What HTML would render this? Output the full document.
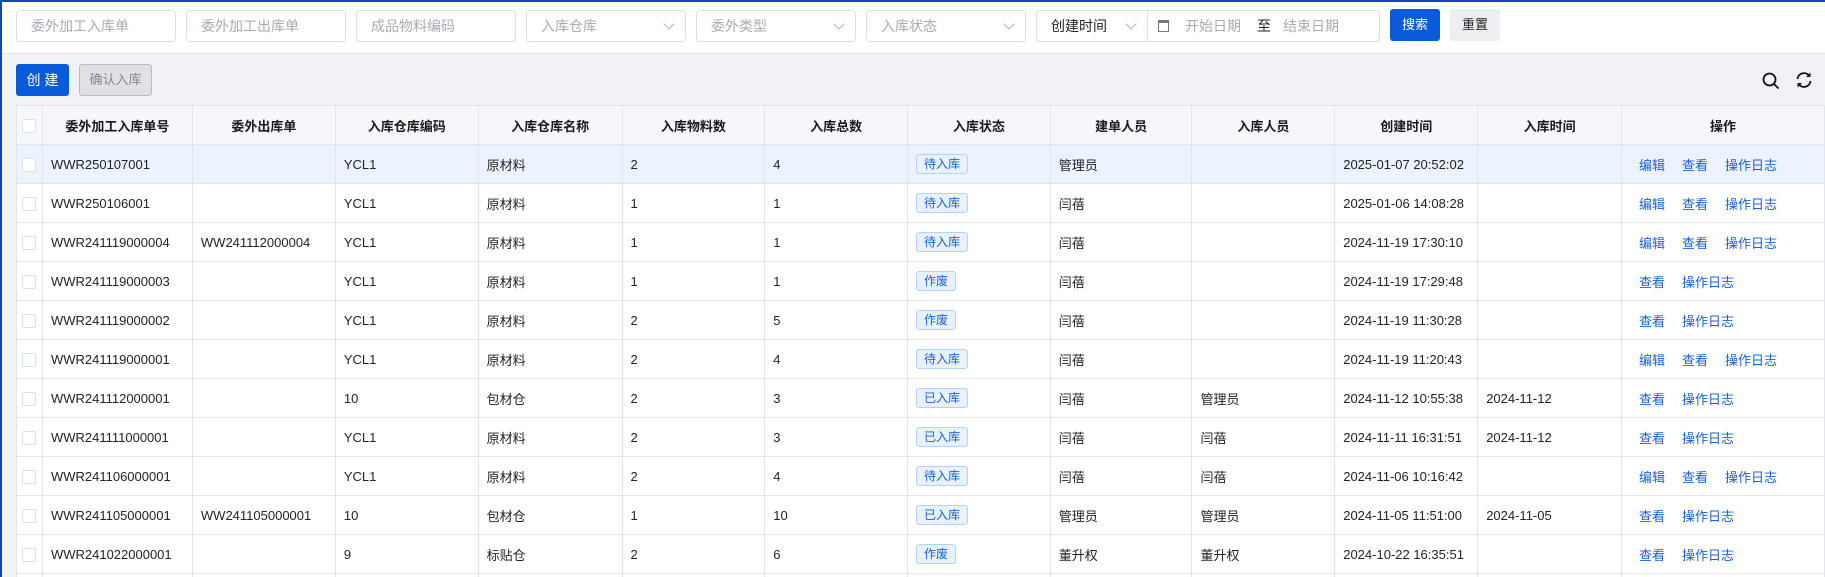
<!DOCTYPE html>
<html style="width:1825px;height:577px;overflow:hidden"><head><meta charset="utf-8"><style>
*{box-sizing:border-box;margin:0;padding:0}
body{width:1825px;height:577px;overflow:hidden;background:#f0f2f5;font-family:"Liberation Sans","Noto Sans CJK SC",sans-serif;font-size:13px;color:#222;position:relative}
.top{position:absolute;left:0;top:0;width:1825px;height:54px;background:#fff;border-bottom:1px solid #e4e7ed}
.bar{position:absolute;left:0;top:0;height:2px;background:#1444b8;width:1825px}
.lb{position:absolute;left:0;top:0;width:2px;height:577px;background:#1444b8;z-index:5}
.in{position:absolute;top:10px;height:32px;border:1px solid #dcdfe6;border-radius:4px;background:#fff;color:#a8abb2;font-size:14px;line-height:30px;padding-left:14px}
.in .ar{position:absolute;right:12px;top:9px;width:8px;height:8px;border-right:1px solid #b0b3b8;border-bottom:1px solid #b0b3b8;transform:rotate(45deg)}
.btn{position:absolute;height:32px;border-radius:3px;font-size:13px;line-height:32px;text-align:center}
.tw{position:absolute;left:16px;top:105px;width:1809px;height:472px;overflow:hidden}
table{border-collapse:collapse;table-layout:fixed;background:#fff}
td,th{border:1px solid #e2e6ec;height:39px;padding:0 8px;white-space:nowrap;overflow:hidden;font-weight:normal;text-align:left}
th{background:#f5f7fa;font-weight:bold;text-align:center;font-size:13px;color:#1a1a1a}
tr.hl td{background:#ebf3fe}
.cb{display:inline-block;width:14px;height:14px;border:1px solid #dcdfe6;border-radius:2px;background:#fff;vertical-align:middle}
td.c,th.c{padding:0;text-align:center}
td.op{padding-left:17px}
.tag{display:inline-block;height:20px;line-height:18px;padding:0 7px;border:1px solid #b6d2fb;background:#e8f1fe;color:#1b5fd9;border-radius:3px;font-size:12px}
.lk{color:#1b5fd9;margin-right:17px}
</style></head><body>
<div class="lb"></div>
<div class="top"><div class="bar"></div>
<div class="in" style="left:16px;width:160px">委外加工入库单</div>
<div class="in" style="left:186px;width:160px">委外加工出库单</div>
<div class="in" style="left:356px;width:160px">成品物料编码</div>
<div class="in" style="left:526px;width:160px">入库仓库<span class="ar"></span></div>
<div class="in" style="left:696px;width:160px">委外类型<span class="ar"></span></div>
<div class="in" style="left:866px;width:160px">入库状态<span class="ar"></span></div>
<div class="in" style="left:1036px;width:112px;color:#222;border-radius:4px 0 0 4px">创建时间<span class="ar"></span></div>
<div class="in" style="left:1147px;width:233px;border-radius:0 4px 4px 0;padding-left:10px"><span style="display:inline-block;width:11px;height:12px;border:1px solid #777;border-top-width:3px;vertical-align:-1px"></span><span style="margin-left:16px">开始日期</span><span style="margin-left:16px;color:#222">至</span><span style="margin-left:12px">结束日期</span></div>
<div class="btn" style="left:1390px;top:9px;width:50px;background:#0a5bd9;color:#fff">搜索</div>
<div class="btn" style="left:1450px;top:9px;width:50px;background:#eceef1;color:#222">重置</div>
</div>
<div class="btn" style="left:16px;top:64px;width:53px;background:#0a5bd9;color:#fff;font-size:14px">创 建</div>
<div class="btn" style="left:79px;top:64px;width:73px;background:#dfe1e5;border:1px solid #b9bcc1;color:#888;line-height:30px">确认入库</div>
<svg style="position:absolute;left:1761px;top:71px" width="20" height="20" viewBox="0 0 20 20"><circle cx="8.5" cy="8.5" r="6" fill="none" stroke="#111" stroke-width="1.8"/><path d="M13 13l4.5 4.5" stroke="#111" stroke-width="1.8"/></svg>
<svg style="position:absolute;left:1794px;top:70px" width="20" height="20" viewBox="0 0 20 20"><path d="M3.5 9A6.5 6.5 0 0 1 15 5.5M16.5 11A6.5 6.5 0 0 1 5 14.5" fill="none" stroke="#111" stroke-width="1.8"/><path d="M16.5 2.5v4.5h-4.5zM3.5 17.5v-4.5h4.5z" fill="#111"/></svg>
<div class="tw"><table>
<colgroup><col style="width:26px"><col style="width:150px"><col style="width:143px"><col style="width:143px"><col style="width:144px"><col style="width:143px"><col style="width:143px"><col style="width:143px"><col style="width:142px"><col style="width:143px"><col style="width:143px"><col style="width:144px"><col style="width:203px"></colgroup>
<tr><th class="c"><span class="cb"></span></th><th>委外加工入库单号</th><th>委外出库单</th><th>入库仓库编码</th><th>入库仓库名称</th><th>入库物料数</th><th>入库总数</th><th>入库状态</th><th>建单人员</th><th>入库人员</th><th>创建时间</th><th>入库时间</th><th>操作</th></tr>
<tr class="hl"><td class="c"><span class="cb"></span></td><td>WWR250107001</td><td></td><td>YCL1</td><td>原材料</td><td>2</td><td>4</td><td><span class="tag">待入库</span></td><td>管理员</td><td></td><td>2025-01-07 20:52:02</td><td></td><td class="op"><span class="lk">编辑</span><span class="lk">查看</span><span class="lk">操作日志</span></td></tr>
<tr><td class="c"><span class="cb"></span></td><td>WWR250106001</td><td></td><td>YCL1</td><td>原材料</td><td>1</td><td>1</td><td><span class="tag">待入库</span></td><td>闫蓓</td><td></td><td>2025-01-06 14:08:28</td><td></td><td class="op"><span class="lk">编辑</span><span class="lk">查看</span><span class="lk">操作日志</span></td></tr>
<tr><td class="c"><span class="cb"></span></td><td>WWR241119000004</td><td>WW241112000004</td><td>YCL1</td><td>原材料</td><td>1</td><td>1</td><td><span class="tag">待入库</span></td><td>闫蓓</td><td></td><td>2024-11-19 17:30:10</td><td></td><td class="op"><span class="lk">编辑</span><span class="lk">查看</span><span class="lk">操作日志</span></td></tr>
<tr><td class="c"><span class="cb"></span></td><td>WWR241119000003</td><td></td><td>YCL1</td><td>原材料</td><td>1</td><td>1</td><td><span class="tag">作废</span></td><td>闫蓓</td><td></td><td>2024-11-19 17:29:48</td><td></td><td class="op"><span class="lk">查看</span><span class="lk">操作日志</span></td></tr>
<tr><td class="c"><span class="cb"></span></td><td>WWR241119000002</td><td></td><td>YCL1</td><td>原材料</td><td>2</td><td>5</td><td><span class="tag">作废</span></td><td>闫蓓</td><td></td><td>2024-11-19 11:30:28</td><td></td><td class="op"><span class="lk">查看</span><span class="lk">操作日志</span></td></tr>
<tr><td class="c"><span class="cb"></span></td><td>WWR241119000001</td><td></td><td>YCL1</td><td>原材料</td><td>2</td><td>4</td><td><span class="tag">待入库</span></td><td>闫蓓</td><td></td><td>2024-11-19 11:20:43</td><td></td><td class="op"><span class="lk">编辑</span><span class="lk">查看</span><span class="lk">操作日志</span></td></tr>
<tr><td class="c"><span class="cb"></span></td><td>WWR241112000001</td><td></td><td>10</td><td>包材仓</td><td>2</td><td>3</td><td><span class="tag">已入库</span></td><td>闫蓓</td><td>管理员</td><td>2024-11-12 10:55:38</td><td>2024-11-12</td><td class="op"><span class="lk">查看</span><span class="lk">操作日志</span></td></tr>
<tr><td class="c"><span class="cb"></span></td><td>WWR241111000001</td><td></td><td>YCL1</td><td>原材料</td><td>2</td><td>3</td><td><span class="tag">已入库</span></td><td>闫蓓</td><td>闫蓓</td><td>2024-11-11 16:31:51</td><td>2024-11-12</td><td class="op"><span class="lk">查看</span><span class="lk">操作日志</span></td></tr>
<tr><td class="c"><span class="cb"></span></td><td>WWR241106000001</td><td></td><td>YCL1</td><td>原材料</td><td>2</td><td>4</td><td><span class="tag">待入库</span></td><td>闫蓓</td><td>闫蓓</td><td>2024-11-06 10:16:42</td><td></td><td class="op"><span class="lk">编辑</span><span class="lk">查看</span><span class="lk">操作日志</span></td></tr>
<tr><td class="c"><span class="cb"></span></td><td>WWR241105000001</td><td>WW241105000001</td><td>10</td><td>包材仓</td><td>1</td><td>10</td><td><span class="tag">已入库</span></td><td>管理员</td><td>管理员</td><td>2024-11-05 11:51:00</td><td>2024-11-05</td><td class="op"><span class="lk">查看</span><span class="lk">操作日志</span></td></tr>
<tr><td class="c"><span class="cb"></span></td><td>WWR241022000001</td><td></td><td>9</td><td>标贴仓</td><td>2</td><td>6</td><td><span class="tag">作废</span></td><td>董升权</td><td>董升权</td><td>2024-10-22 16:35:51</td><td></td><td class="op"><span class="lk">查看</span><span class="lk">操作日志</span></td></tr>
<tr><td class="c"><span class="cb"></span></td><td></td><td></td><td></td><td></td><td></td><td></td><td></td><td></td><td></td><td></td><td></td><td></td></tr>
</table></div>
</body></html>
